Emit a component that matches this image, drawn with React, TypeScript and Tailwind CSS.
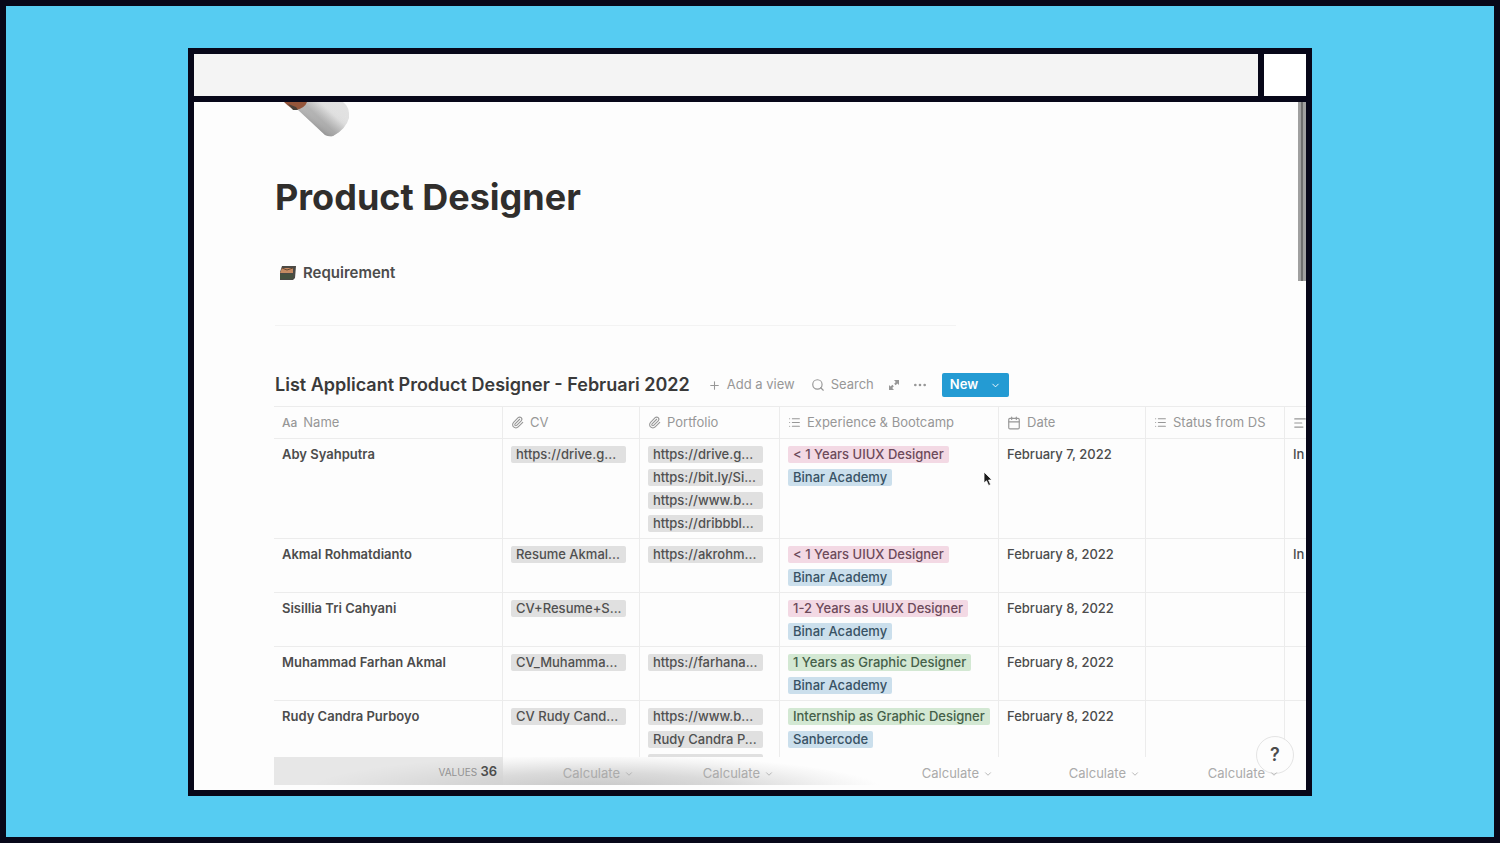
import type { ReactNode } from "react";
import {
  AlignLeft,
  Calendar,
  ChevronDown,
  Ellipsis,
  List,
  Paperclip,
  Plus,
  Search,
} from "lucide-react";

type Tone = "gray" | "pink" | "blue" | "green";
type TagData = { label: string; tone: Tone };
type Applicant = {
  name: string;
  cv: string;
  portfolio: string[];
  tags: TagData[];
  date: string;
  note: string;
};

const toneClass: Record<Tone, string> = {
  gray: "w-[115px] bg-[#e0e0e0] text-[#505050]",
  pink: "bg-[#f3d9e4] text-[#6d4a5a]",
  blue: "bg-[#cbdfec] text-[#385264]",
  green: "bg-[#d3e8d3] text-[#456049]",
};

const binar: TagData = { label: "Binar Academy", tone: "blue" };

const applicants: Applicant[] = [
  {
    name: "Aby Syahputra",
    cv: "https://drive.g...",
    portfolio: ["https://drive.g...", "https://bit.ly/Si...", "https://www.b...", "https://dribbbl..."],
    tags: [{ label: "< 1 Years UIUX Designer", tone: "pink" }, binar],
    date: "February 7, 2022",
    note: "In",
  },
  {
    name: "Akmal Rohmatdianto",
    cv: "Resume Akmal...",
    portfolio: ["https://akrohm..."],
    tags: [{ label: "< 1 Years UIUX Designer", tone: "pink" }, binar],
    date: "February 8, 2022",
    note: "In",
  },
  {
    name: "Sisillia Tri Cahyani",
    cv: "CV+Resume+S...",
    portfolio: [],
    tags: [{ label: "1-2 Years as UIUX Designer", tone: "pink" }, binar],
    date: "February 8, 2022",
    note: "",
  },
  {
    name: "Muhammad Farhan Akmal",
    cv: "CV_Muhamma...",
    portfolio: ["https://farhana..."],
    tags: [{ label: "1 Years as Graphic Designer", tone: "green" }, binar],
    date: "February 8, 2022",
    note: "",
  },
  {
    name: "Rudy Candra Purboyo",
    cv: "CV Rudy Cand...",
    portfolio: ["https://www.b...", "Rudy Candra P...", ""],
    tags: [
      { label: "Internship as Graphic Designer", tone: "green" },
      { label: "Sanbercode", tone: "blue" },
    ],
    date: "February 8, 2022",
    note: "",
  },
];

function Columns() {
  return (
    <colgroup>
      <col className="w-[229px]" />
      <col className="w-[137px]" />
      <col className="w-[140px]" />
      <col className="w-[219px]" />
      <col className="w-[147px]" />
      <col className="w-[139px]" />
      <col className="w-[200px]" />
    </colgroup>
  );
}

function Tag({ label, tone }: TagData) {
  return (
    <span
      className={`h-[17px] rounded-xs px-[5px] text-[13px] leading-[17px] font-medium whitespace-nowrap ${toneClass[tone]}`}
    >
      {label}
    </span>
  );
}

function HeaderCell({ icon, children }: { icon: ReactNode; children?: ReactNode }) {
  return (
    <th scope="col" className="border-y border-r border-[#ececec] px-2 text-left font-normal">
      <span className="flex h-[31px] items-center gap-1.5 text-[13px] whitespace-nowrap">
        {icon}
        {children}
      </span>
    </th>
  );
}

function TagCell({ tags }: { tags: TagData[] }) {
  return (
    <td className="border-r border-b border-[#ececec] px-2 pt-[7px] pb-1.5 align-top">
      <div className="flex flex-col items-start gap-1.5">
        {tags.map((tag) => (
          <Tag key={tag.label} {...tag} />
        ))}
      </div>
    </td>
  );
}

function TextCell({ children, strong = false }: { children?: ReactNode; strong?: boolean }) {
  return (
    <td
      className={`border-r border-b border-[#ececec] px-2 pt-[7px] pb-1.5 align-top text-[13px] leading-[17px] whitespace-nowrap ${strong ? "font-semibold" : "font-medium"}`}
    >
      {children}
    </td>
  );
}

function CalculateCell() {
  return (
    <td className="px-1.5 pt-0.5 text-right">
      <button type="button" className="inline-flex items-center gap-1 text-[13px] text-[#ababab]">
        Calculate
        <ChevronDown size={10} />
      </button>
    </td>
  );
}

function BrushIcon() {
  return (
    <svg width="70" height="35" viewBox="0 0 70 35" aria-hidden="true" className="ml-2">
      <defs>
        <linearGradient id="barrel" x1="22" y1="28" x2="52" y2="-4" gradientUnits="userSpaceOnUse">
          <stop offset="0" stopColor="#cfcfcf" />
          <stop offset="0.2" stopColor="#d8d8d8" />
          <stop offset="0.42" stopColor="#aeaeae" />
          <stop offset="0.7" stopColor="#e0e0e0" />
          <stop offset="1" stopColor="#e2e2e2" />
        </linearGradient>
        <linearGradient id="tip" x1="44" y1="36" x2="60" y2="12" gradientUnits="userSpaceOnUse">
          <stop offset="0" stopColor="#8d8d8d" />
          <stop offset="0.4" stopColor="#b0b0b0" stopOpacity="0.6" />
          <stop offset="1" stopColor="#e8e8e8" stopOpacity="0" />
        </linearGradient>
      </defs>
      <path d="M13 6 L24 0 L60 0 Q67 5 66 16 Q63 27 50 34 Q46 35 42 33 Z" fill="url(#barrel)" />
      <path d="M13 6 L24 0 L60 0 Q67 5 66 16 Q63 27 50 34 Q46 35 42 33 Z" fill="url(#tip)" />
      <path d="M1 0 H24 Q22 6 13 8 Q8 7 1 0Z" fill="#94553b" />
      <path d="M5 2 L10 8 L15 8 L13 5Z" fill="#4a4039" />
    </svg>
  );
}

function BoxIcon() {
  return (
    <svg width="18" height="16" viewBox="0 0 18 16" aria-hidden="true">
      <path d="M3 1 H17 L16 13 L14 15 H1 V7Z" fill="#4b4945" />
      <path d="M3 3 H14 V8 H1Z" fill="#c58a62" />
      <path d="M3 3 L8 5 L14 3" fill="none" stroke="#66472f" strokeWidth="1" />
      <path d="M1 9 H14 V14 H1Z" fill="#46503f" />
    </svg>
  );
}

function ExpandIcon() {
  return (
    <svg width="12" height="12" viewBox="0 0 12 12" aria-hidden="true" fill="currentColor">
      <path d="M6 1 H11 V6 L9.5 4.5 L7.6 6.2 L6.2 4.8 L7.8 3Z" />
      <path d="M6 11 H1 V6 L2.5 7.5 L4.4 5.8 L5.8 7.2 L4.2 9Z" />
    </svg>
  );
}

function Pointer() {
  return (
    <svg
      width="10"
      height="16"
      viewBox="0 0 10 16"
      aria-hidden="true"
      className="pointer-events-none absolute top-[369px] left-[789px]"
    >
      <path d="M1 1 V12 L3.5 9.8 L5.6 14.5 L7.6 13.6 L5.6 9 H9Z" fill="#1c1c1c" stroke="#fff" strokeWidth="0.8" />
    </svg>
  );
}

export default function App() {
  return (
    <main className="flex h-screen flex-col border-6 border-[#070719] bg-[#56ccf2] px-[182px] pt-[42px] pb-[41px] font-['Inter',sans-serif]">
      <section className="flex min-h-0 flex-1 flex-col border-6 border-[#070719] bg-[#fdfdfd]">
        <header className="flex h-12 shrink-0 border-b-6 border-[#070719] bg-[#f4f4f4]">
          <div className="flex-1" />
          <button type="button" aria-label="Close window" className="w-12 border-l-6 border-[#070719] bg-white" />
        </header>

        <div className="relative flex min-h-0 flex-1 flex-col overflow-hidden pl-20 text-[#4c4c4c]">
          <div className="flex min-h-0 flex-1 flex-col overflow-hidden">
            <div className="shrink-0 pl-px">
              <BrushIcon />
              <h1 className="mt-[38px] text-4xl leading-11 font-bold text-[#302e2c]">Product Designer</h1>
              <a
                href="#requirement"
                className="mt-[42px] flex h-6 w-max items-center gap-1.5 pl-1 text-[15px] font-semibold"
              >
                <BoxIcon />
                Requirement
              </a>
              <hr className="mt-10 w-[681px] border-[#f3f3f3]" />

              <div className="mt-[47px] flex h-6 items-center text-[13px] whitespace-nowrap text-[#979797]">
                <h2 className="text-lg font-semibold text-[#3a3a3a]">
                  List Applicant Product Designer - Februari 2022
                </h2>
                <button type="button" className="ml-[18px] flex items-center gap-1.5">
                  <Plus size={13} />
                  Add a view
                </button>
                <button type="button" className="ml-4 flex items-center gap-1.5">
                  <Search size={14} />
                  Search
                </button>
                <button type="button" aria-label="Expand" className="ml-3.5">
                  <ExpandIcon />
                </button>
                <button type="button" aria-label="More options" className="ml-3">
                  <Ellipsis size={16} />
                </button>
                <button
                  type="button"
                  className="ml-3.5 flex h-6 w-[67px] items-center justify-between rounded-xs bg-[#249bd3] px-2 font-semibold text-white"
                >
                  New
                  <ChevronDown size={11} />
                </button>
              </div>
            </div>

            <table className="mt-[9px] w-[1211px] shrink-0 table-fixed border-separate border-spacing-0">
              <Columns />
              <thead className="text-[#979797]">
                <tr>
                  <HeaderCell icon={<span className="text-xs font-medium">Aa</span>}>Name</HeaderCell>
                  <HeaderCell icon={<Paperclip size={13} />}>CV</HeaderCell>
                  <HeaderCell icon={<Paperclip size={13} />}>Portfolio</HeaderCell>
                  <HeaderCell icon={<List size={13} />}>Experience &amp; Bootcamp</HeaderCell>
                  <HeaderCell icon={<Calendar size={14} />}>Date</HeaderCell>
                  <HeaderCell icon={<List size={13} />}>Status from DS</HeaderCell>
                  <HeaderCell icon={<AlignLeft size={14} />} />
                </tr>
              </thead>
              <tbody>
                {applicants.map((person) => (
                  <tr key={person.name}>
                    <TextCell strong>{person.name}</TextCell>
                    <TagCell tags={[{ label: person.cv, tone: "gray" }]} />
                    <TagCell tags={person.portfolio.map((label) => ({ label, tone: "gray" as const }))} />
                    <TagCell tags={person.tags} />
                    <TextCell>{person.date}</TextCell>
                    <TextCell />
                    <TextCell>{person.note}</TextCell>
                  </tr>
                ))}
              </tbody>
            </table>
          </div>

          <div className="relative z-10 mb-[5px] h-7 shrink-0 overflow-hidden bg-[radial-gradient(ellipse_290px_36px_at_320px_120%,#c4c4c4,#dadada_50%,#f4f4f4_85%,transparent)]">
            <table className="w-[1211px] table-fixed border-separate border-spacing-0">
              <Columns />
              <tbody>
                <tr className="h-7">
                  <td className="bg-[#d2d2d2]/50 px-1.5 pt-0.5 text-right text-[13px] font-semibold">
                    <span className="text-[10px] font-normal text-[#929292]">VALUES</span> 36
                  </td>
                  <CalculateCell />
                  <CalculateCell />
                  <CalculateCell />
                  <CalculateCell />
                  <CalculateCell />
                  <td />
                </tr>
              </tbody>
            </table>
          </div>

          <div className="absolute top-0 right-0 h-[179px] w-2 border-x-3 border-[#a0a0a0] bg-[#6f6f6f]" />
          <button
            type="button"
            aria-label="Help"
            className="absolute right-3 bottom-4 size-[38px] rounded-full border border-[#e4e4e4] bg-[#fdfdfd] text-lg font-semibold"
          >
            ?
          </button>
          <Pointer />
        </div>
      </section>
    </main>
  );
}
